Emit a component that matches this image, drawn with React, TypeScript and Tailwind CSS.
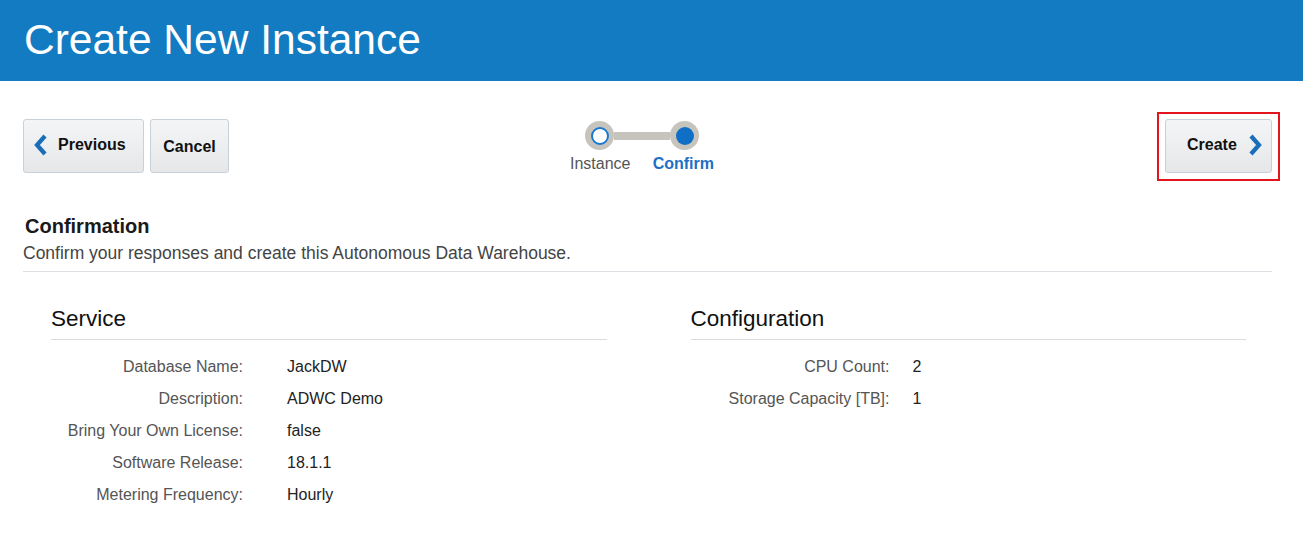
import React from "react"

const service = [
  ["Database Name:", "JackDW"],
  ["Description:", "ADWC Demo"],
  ["Bring Your Own License:", "false"],
  ["Software Release:", "18.1.1"],
  ["Metering Frequency:", "Hourly"],
]

const config = [
  ["CPU Count:", "2"],
  ["Storage Capacity [TB]:", "1"],
]

function Chevron({ dir }: { dir: "left" | "right" }) {
  return (
    <svg width="14" height="22" viewBox="0 0 14 22" className="shrink-0">
      <polyline
        points={dir === "left" ? "11,2 3,11 11,20" : "3,2 11,11 3,20"}
        fill="none"
        stroke="#1a6db8"
        strokeWidth="4.2"
        strokeLinejoin="miter"
      />
    </svg>
  )
}

const btn =
  "flex h-[54px] items-center rounded-[3px] border border-[#c9d0d6] bg-gradient-to-b from-[#f4f5f6] to-[#e5e7e9] text-[16px] font-bold text-[#111]"

function Section({
  title,
  rows,
  labelW,
  gap,
}: {
  title: string
  rows: string[][]
  labelW: string
  gap: string
}) {
  return (
    <div>
      <h3 className="border-b border-[#dcdcdc] pb-[6px] text-[22.5px] leading-[28px] text-[#111]">{title}</h3>
      <div className="pt-[11px]">
        {rows.map(([k, v]) => (
          <div key={k} className={`flex h-[32px] items-center ${gap}`}>
            <div className={`${labelW} text-right text-[#555]`}>{k}</div>
            <div className="text-[#222]">{v}</div>
          </div>
        ))}
      </div>
    </div>
  )
}

export default function App() {
  return (
    <div className="h-[540px] w-[1303px] bg-white text-[16px]" style={{ fontFamily: '"Liberation Sans", Arial, sans-serif' }}>
      <header className="flex h-[81px] items-center bg-[#137bc2] pl-[24px]">
        <h1 className="text-[42.5px] leading-none text-white">Create New Instance</h1>
      </header>

      <div className="px-[23px] pr-[31px]">
        <div className="relative mt-[38px] flex items-start justify-between">
          <div className="flex gap-[6px]">
            <button className={`${btn} w-[121px] gap-[10px] pl-[10px] pb-[2px]`}>
              <Chevron dir="left" />
              Previous
            </button>
            <button className={`${btn} w-[79px] justify-center pt-[2px]`}>Cancel</button>
          </div>

          <div className="absolute left-[547px] top-[2px] flex w-[144px] flex-col items-center">
            <div className="flex items-center">
              <div className="flex h-[29px] w-[29px] items-center justify-center rounded-full bg-[#c7c4be]">
                <div className="h-[18px] w-[18px] rounded-full border-2 border-[#1b78cf] bg-white" />
              </div>
              <div className="h-[8px] w-[56px] bg-[#c7c4be]" />
              <div className="flex h-[29px] w-[29px] items-center justify-center rounded-full bg-[#c7c4be]">
                <div className="h-[18px] w-[18px] rounded-full bg-[#0f6fc6]" />
              </div>
            </div>
            <div className="mt-[2px] flex w-[144px] justify-between">
              <span className="text-[#555]">Instance</span>
              <span className="font-bold text-[#1d6fc4]">Confirm</span>
            </div>
          </div>

          <div className="relative">
            <button className={`${btn} w-[107px] gap-[11px] pl-[21px] pb-[2px]`}>
              Create
              <Chevron dir="right" />
            </button>
            <div className="pointer-events-none absolute -left-[8px] -right-[8px] -top-[7px] -bottom-[8px] border-2 border-[#e3141b]" />
          </div>
        </div>

        <div className="mt-[41px] border-b border-[#dcdfe3] pb-[7px]">
          <h2 className="pl-[2px] text-[20px] font-bold leading-[24px] text-[#1a1a1a]">Confirmation</h2>
          <p className="mt-[5px] text-[17.5px] leading-[21px] text-[#444]">
            Confirm your responses and create this Autonomous Data Warehouse.
          </p>
        </div>

        <div className="grid grid-cols-2 gap-x-[84px] pl-[28px] pr-[26px] pt-[33px]">
          <Section title="Service" rows={service} labelW="w-[192px]" gap="gap-[44px]" />
          <Section title="Configuration" rows={config} labelW="w-[199px]" gap="gap-[23px]" />
        </div>
      </div>
    </div>
  )
}
